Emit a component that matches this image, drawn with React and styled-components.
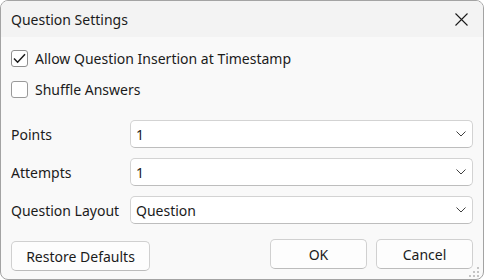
import React from "react";
import styled, { createGlobalStyle } from "styled-components";

const Global = createGlobalStyle`
  html, body { margin: 0; padding: 0; background: #ffffff; }
  * { box-sizing: border-box; }
  body { font-family: "Noto Sans", "Open Sans", sans-serif; }
`;

const Window = styled.div`
  position: relative;
  width: 484px;
  height: 280px;
  border: 1px solid #a3a3a3;
  border-radius: 8px;
  overflow: hidden;
  background: #f9f9f9;
  display: flex;
  flex-direction: column;
  color: #1b1b1b;
  font-size: 14px;
`;

const TitleBar = styled.div`
  height: 36px;
  background: #f3f3f3;
  display: flex;
  align-items: center;
  justify-content: space-between;
  padding: 0 15px 0 10px;
`;

const Title = styled.div`
  font-size: 14px;
`;

const CloseButton = styled.div`
  width: 14px;
  height: 14px;
  display: flex;
  align-items: center;
  justify-content: center;
`;

const Body = styled.div`
  flex: 1;
  display: flex;
  flex-direction: column;
  padding: 6px 10px 0 10px;
`;

const CheckRow = styled.label`
  height: 31px;
  display: flex;
  align-items: center;
  gap: 7px;
`;

const Box = styled.span`
  width: 17px;
  height: 17px;
  border: 1px solid ${(p) => (p.$checked ? "#8f8f8f" : "#9a9a9a")};
  border-radius: 3px;
  background: #ffffff;
  display: flex;
  align-items: center;
  justify-content: center;
  flex-shrink: 0;
`;

const Form = styled.div`
  margin-top: 15px;
  display: flex;
  flex-direction: column;
  gap: 10px;
`;

const FieldRow = styled.div`
  display: flex;
  align-items: center;
  height: 28px;
`;

const Label = styled.div`
  width: 119px;
`;

const Combo = styled.div`
  flex: 1;
  height: 28px;
  background: #ffffff;
  border: 1px solid #d3d3d3;
  border-bottom-color: #bdbdbd;
  border-radius: 5px;
  display: flex;
  align-items: center;
  justify-content: space-between;
  padding: 0 6px 0 5px;
`;

const Footer = styled.div`
  margin-top: 15px;
  display: flex;
  align-items: flex-start;
`;

const Button = styled.div`
  width: ${(p) => p.$w}px;
  height: 30px;
  margin-top: ${(p) => p.$offset || 0}px;
  margin-left: ${(p) => p.$ml || 0}px;
  background: #fdfdfd;
  border: 1px solid #d0d0d0;
  border-bottom-color: #bcbcbc;
  border-radius: 5px;
  display: flex;
  align-items: center;
  justify-content: center;
`;

const Grip = styled.svg`
  position: absolute;
  right: 2px;
  bottom: 2px;
`;

const Chevron = () => (
  <svg width="10" height="6" viewBox="0 0 10 6">
    <path d="M0.5 0.5 L5 5 L9.5 0.5" fill="none" stroke="#404040" strokeWidth="1" />
  </svg>
);

const Field = ({ label, value }) => (
  <FieldRow>
    <Label>{label}</Label>
    <Combo>
      <span>{value}</span>
      <Chevron />
    </Combo>
  </FieldRow>
);

export default function App() {
  return (
    <>
      <Global />
      <Window>
        <TitleBar>
          <Title>Question Settings</Title>
          <CloseButton>
            <svg width="13" height="13" viewBox="0 0 13 13">
              <path d="M0.5 0.5 L12.5 12.5 M12.5 0.5 L0.5 12.5" stroke="#1b1b1b" strokeWidth="1.1" />
            </svg>
          </CloseButton>
        </TitleBar>
        <Body>
          <CheckRow>
            <Box $checked>
              <svg width="13" height="11" viewBox="0 0 13 11">
                <path d="M1 5.5 L4.6 9.2 L12 1.3" fill="none" stroke="#1b1b1b" strokeWidth="1.5" />
              </svg>
            </Box>
            Allow Question Insertion at Timestamp
          </CheckRow>
          <CheckRow>
            <Box />
            Shuffle Answers
          </CheckRow>
          <Form>
            <Field label="Points" value="1" />
            <Field label="Attempts" value="1" />
            <Field label="Question Layout" value="Question" />
          </Form>
          <Footer>
            <Button $w={139} $offset={2}>Restore Defaults</Button>
            <Button $w={97} $ml={120}>OK</Button>
            <Button $w={97} $ml={9}>Cancel</Button>
          </Footer>
        </Body>
        <Grip width="12" height="10" viewBox="0 0 12 10">
          <g fill="#c4c4c4">
            <rect x="8" y="0" width="2" height="2" />
            <rect x="4" y="4" width="2" height="2" />
            <rect x="8" y="4" width="2" height="2" />
            <rect x="0" y="8" width="2" height="2" />
            <rect x="4" y="8" width="2" height="2" />
            <rect x="8" y="8" width="2" height="2" />
          </g>
        </Grip>
      </Window>
    </>
  );
}
